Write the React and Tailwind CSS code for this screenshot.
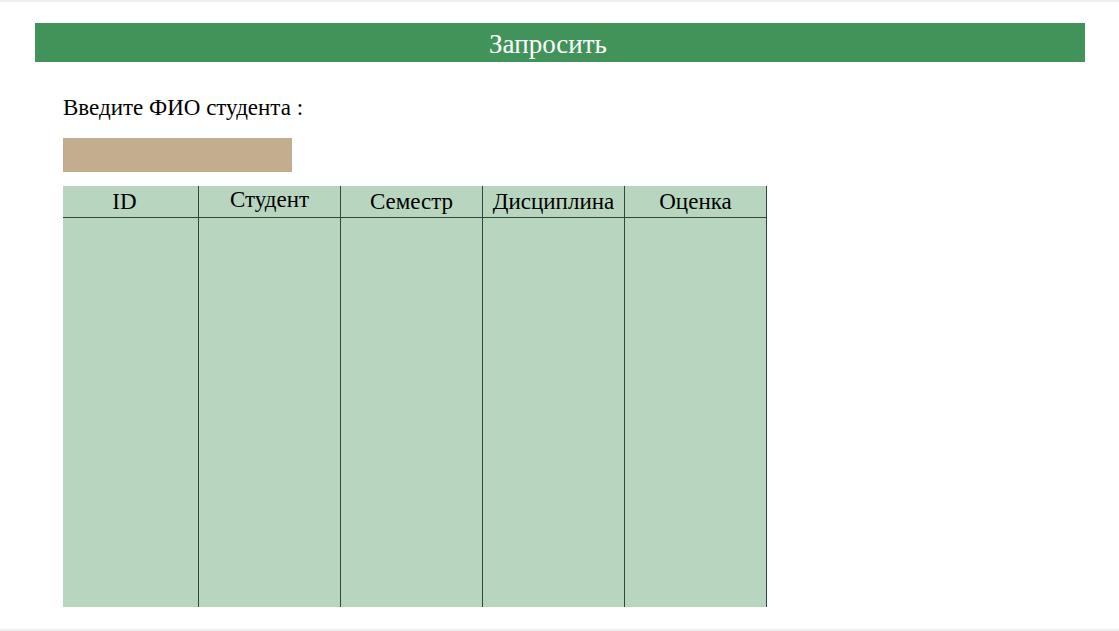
import React from 'react';

const columns = [
    { title: 'ID', width: 'w-[135px]', pad: 'pr-[12px]' },
    { title: 'Студент', width: 'w-[142px]', pad: 'pb-[4px]' },
    { title: 'Семестр', width: 'w-[142px]', pad: '' },
    { title: 'Дисциплина', width: 'w-[142px]', pad: '' },
    { title: 'Оценка', width: 'w-[142px]', pad: '' },
];

const App = () => {
    return (
        <div className="h-[631px] w-[1119px] bg-white border-t-2 border-b-2 border-[#efefef] font-['Liberation_Serif',serif] text-black">
            <div className="pl-[35px] pt-[21px]">
                <button className="w-[1050px] h-[39px] bg-[#41935a] text-white text-[27px] leading-none flex items-center justify-center pr-[24px] pt-[3px]">
                    Запросить
                </button>
            </div>

            <div className="pl-[63px]">
                <p className="mt-[33px] text-[23px] leading-[26px]">Введите ФИО студента :</p>
                <div className="mt-[17px] w-[229px] h-[34px] bg-[#c2ad8f]" />

                <div className="mt-[14px] flex h-[421px] w-[704px] bg-[#b8d6bf] border-r border-[#33463a]">
                    {columns.map((col, i) => (
                        <div
                            key={col.title}
                            className={`${col.width} flex flex-col ${i > 0 ? 'border-l border-[#33463a]' : ''}`}
                        >
                            <div className={`h-[32px] border-b border-[#33463a] flex items-center justify-center text-[23px] leading-none ${col.pad}`}>
                                {col.title}
                            </div>
                        </div>
                    ))}
                </div>
            </div>
        </div>
    );
};

export default App;
